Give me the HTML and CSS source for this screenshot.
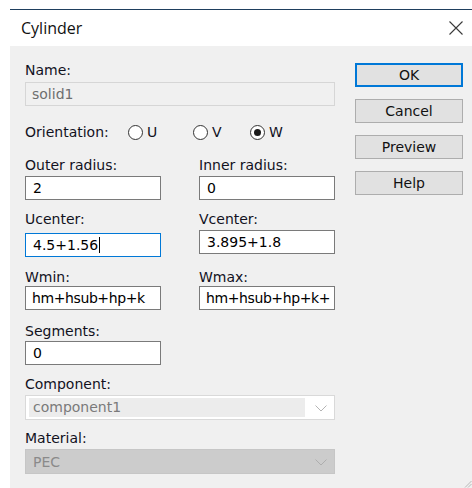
FILE: index.html
```html
<!DOCTYPE html>
<html lang="en">
<head>
<meta charset="utf-8">
<title>Cylinder</title>
<link rel="stylesheet" href="styles.css">
</head>
<body>
<div class="window">
  <div class="titlebar">
    <span class="title">Cylinder</span>
    <svg class="close" width="16" height="16" viewBox="0 0 16 16" aria-label="Close">
      <path d="M1.5 1.5 L14.5 14.5 M14.5 1.5 L1.5 14.5" stroke="#3a3a3a" stroke-width="1.1" fill="none"/>
    </svg>
  </div>
  <div class="client">
    <div class="form">
      <div class="label name-label">Name:</div>
      <div class="field wide disabled name-field">solid1</div>

      <div class="orient">
        <span class="label">Orientation:</span>
        <span class="opt"><span class="radio"></span>U</span>
        <span class="opt"><span class="radio"></span>V</span>
        <span class="opt"><span class="radio checked"></span>W</span>
      </div>

      <div class="pair pair-radius">
        <div class="cell">
          <div class="label">Outer radius:</div>
          <div class="field">2</div>
        </div>
        <div class="cell">
          <div class="label">Inner radius:</div>
          <div class="field">0</div>
        </div>
      </div>

      <div class="pair pair-center">
        <div class="cell">
          <div class="label">Ucenter:</div>
          <div class="field focused ucenter">4.5+1.56<span class="caret"></span></div>
        </div>
        <div class="cell">
          <div class="label">Vcenter:</div>
          <div class="field vcenter">3.895+1.8</div>
        </div>
      </div>

      <div class="pair pair-w">
        <div class="cell">
          <div class="label">Wmin:</div>
          <div class="field tight">hm+hsub+hp+k</div>
        </div>
        <div class="cell">
          <div class="label">Wmax:</div>
          <div class="field tight">hm+hsub+hp+k+</div>
        </div>
      </div>

      <div class="label seg-label">Segments:</div>
      <div class="field seg-field">0</div>

      <div class="label comp-label">Component:</div>
      <div class="combo wide comp">
        <span class="combo-text">component1</span>
        <svg class="chev" width="12" height="7" viewBox="0 0 12 7"><path d="M0.5 0.5 L6 6 L11.5 0.5" stroke="#b4b4b4" stroke-width="1" fill="none"/></svg>
      </div>

      <div class="label mat-label">Material:</div>
      <div class="combo wide mat">
        <span class="combo-text">PEC</span>
        <svg class="chev" width="12" height="7" viewBox="0 0 12 7"><path d="M0.5 0.5 L6 6 L11.5 0.5" stroke="#aeaeae" stroke-width="1" fill="none"/></svg>
      </div>
    </div>

    <div class="buttons">
      <div class="btn default">OK</div>
      <div class="btn">Cancel</div>
      <div class="btn">Preview</div>
      <div class="btn">Help</div>
    </div>

    <svg class="grip" width="8" height="8" viewBox="0 0 8 8">
      <path d="M7.5 1 L1 7.5 M7.5 4 L4 7.5" stroke="#b8b8b8" stroke-width="1" fill="none"/>
    </svg>
  </div>
</div>
</body>
</html>
```

FILE: styles.css
```css
html, body {
  margin: 0;
  padding: 0;
  background: #ffffff;
}

body {
  width: 472px;
  height: 488px;
  overflow: hidden;
  font-family: "DejaVu Sans", Verdana, sans-serif;
  font-size: 14px;
  color: #12121e;
}

.window {
  margin: 9px 0 0 10px;
  border-top: 1px solid #1f3f5e;
  height: 478px;
  display: flex;
  flex-direction: column;
}

/* title bar */
.titlebar {
  height: 36px;
  background: #ffffff;
  display: flex;
  align-items: center;
  justify-content: space-between;
  padding: 0 8px 0 11px;
}

.title {
  font-family: "Open Sans", "Noto Sans", sans-serif;
  font-size: 16px;
  color: #111111;
  padding-bottom: 1px;
}

.close {
  display: block;
}

/* dialog body */
.client {
  position: relative;
  flex: 1;
  background: #f0f0f0;
  display: flex;
  padding: 0 9px 0 15px;
}

.form {
  width: 310px;
  display: flex;
  flex-direction: column;
}

.label {
  height: 16px;
  line-height: 16px;
  white-space: nowrap;
}

.field {
  box-sizing: border-box;
  height: 24px;
  width: 136px;
  border: 1px solid #7a7a7a;
  background: #ffffff;
  padding: 0 0 0 7px;
  line-height: 22px;
  color: #000000;
  white-space: nowrap;
  overflow: hidden;
  display: flex;
  align-items: center;
}

.field.wide,
.combo.wide {
  width: 310px;
}

.field.disabled {
  border-color: #d6d6d6;
  background: #f0f0f0;
  color: #6e6e6e;
  padding-left: 6px;
}

.field.focused {
  border-color: #0078d7;
}

.field.tight {
  letter-spacing: -0.4px;
  padding-left: 6px;
}

.caret {
  display: inline-block;
  width: 1px;
  height: 16px;
  background: #000000;
  margin-left: 1px;
}

/* vertical rhythm of the rows */
.name-label { margin-top: 16px; }
.name-field { margin-top: 4px; }

.orient {
  margin-top: 18px;
  height: 16px;
  display: grid;
  grid-template-columns: 103px 65px 57px auto;
  align-items: center;
}

.opt {
  display: flex;
  align-items: center;
  gap: 4px;
  line-height: 16px;
}

.radio {
  box-sizing: border-box;
  width: 15px;
  height: 15px;
  border: 1px solid #333333;
  border-radius: 50%;
  background: #ffffff;
  display: flex;
  align-items: center;
  justify-content: center;
}

.radio.checked::after {
  content: "";
  width: 7px;
  height: 7px;
  border-radius: 50%;
  background: #1a1a1a;
}

.pair {
  display: grid;
  grid-template-columns: 136px 136px;
  column-gap: 38px;
  align-items: start;
}

.pair-radius { margin-top: 17px; }
.pair-radius .field { margin-top: 3px; }

.pair-center { margin-top: 11px; }
.pair-center .ucenter { margin-top: 6px; }
.pair-center .vcenter { margin-top: 3px; }

.pair-w { margin-top: 12px; }
.pair-w .field { margin-top: 1px; }

.seg-label { margin-top: 13px; }
.seg-field { margin-top: 2px; }

.comp-label { margin-top: 11px; }
.comp { margin-top: 3px; }

.mat-label { margin-top: 10px; }
.mat { margin-top: 3px; }

/* drop-down lists (disabled) */
.combo {
  box-sizing: border-box;
  height: 25px;
  border: 1px solid #d9d9d9;
  display: flex;
  align-items: center;
  justify-content: space-between;
  padding: 0 7px 0 3px;
  color: #7a7a7a;
}

.combo.comp {
  background: #ffffff;
}

.combo.comp .combo-text {
  background: #ececec;
  width: 272px;
  height: 19px;
  line-height: 19px;
  padding-left: 4px;
}

.combo.mat {
  background: #cccccc;
  border-color: #c6c6c6;
  color: #8a8a8a;
}

.combo.mat .combo-text {
  padding-left: 4px;
}

.chev {
  display: block;
  margin-top: 2px;
}

/* command buttons */
.buttons {
  margin-left: 20px;
  padding-top: 17px;
  display: flex;
  flex-direction: column;
  gap: 12px;
}

.btn {
  box-sizing: border-box;
  width: 108px;
  height: 24px;
  background: #e1e1e1;
  border: 1px solid #adadad;
  display: flex;
  align-items: center;
  justify-content: center;
  color: #111111;
}

.btn.default {
  border: 2px solid #0078d7;
}

.grip {
  position: absolute;
  right: 0;
  bottom: 0;
}
```
